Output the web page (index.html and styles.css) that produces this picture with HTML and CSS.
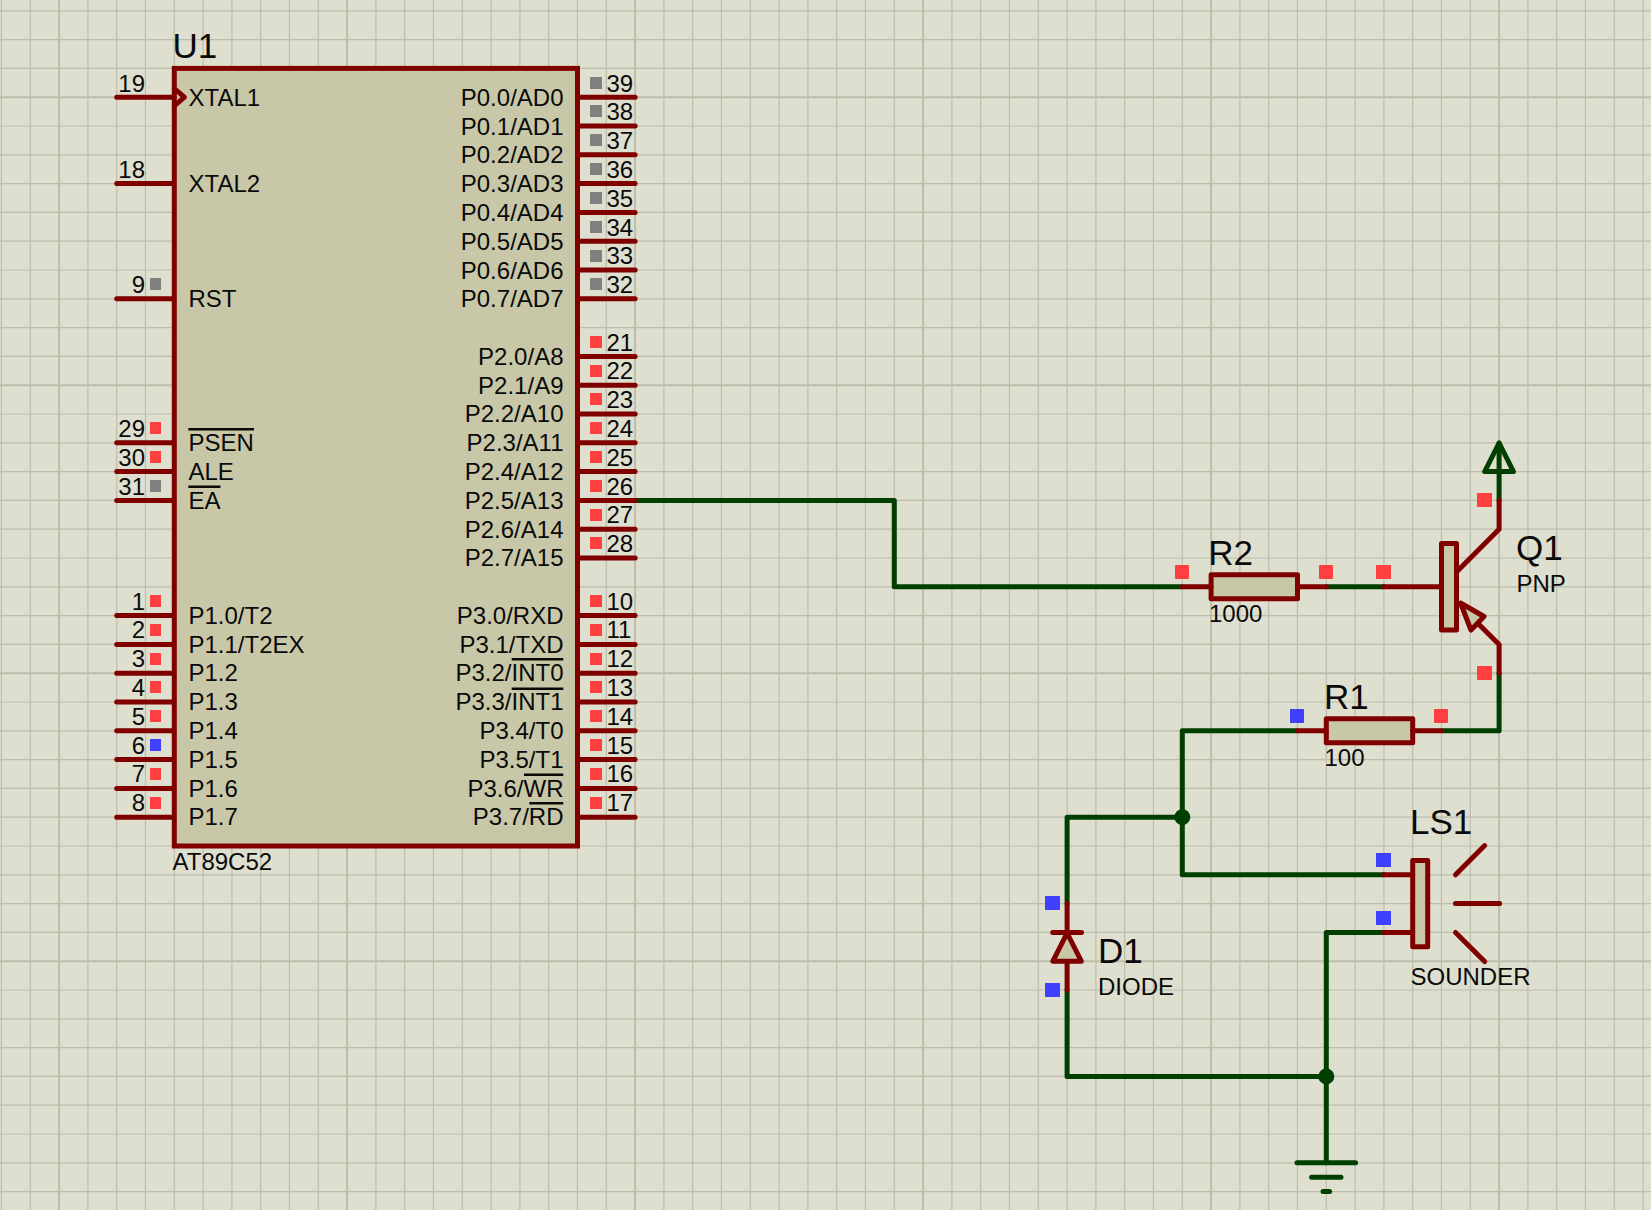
FILE: index.html
```html
<!DOCTYPE html>
<html lang="en">
<head>
<meta charset="utf-8">
<title>AT89C52 sounder schematic</title>
<link rel="stylesheet" href="styles.css">
</head>
<body>
<main class="sheet">
<svg class="schematic" width="1651" height="1210" viewBox="0 0 1651 1210" xmlns="http://www.w3.org/2000/svg">
  <g class="grid">
    <path class="grid-minor" d="M1.5 0V1210M30.3 0V1210M87.9 0V1210M116.7 0V1210M145.5 0V1210M174.3 0V1210M203.1 0V1210M231.9 0V1210M260.7 0V1210M289.5 0V1210M318.3 0V1210M375.9 0V1210M404.7 0V1210M433.5 0V1210M462.3 0V1210M491.1 0V1210M519.9 0V1210M548.7 0V1210M577.5 0V1210M606.3 0V1210M663.9 0V1210M692.7 0V1210M721.5 0V1210M750.3 0V1210M779.1 0V1210M807.9 0V1210M836.7 0V1210M865.5 0V1210M894.3 0V1210M951.9 0V1210M980.7 0V1210M1009.5 0V1210M1038.3 0V1210M1067.1 0V1210M1095.9 0V1210M1124.7 0V1210M1153.5 0V1210M1182.3 0V1210M1239.9 0V1210M1268.7 0V1210M1297.5 0V1210M1326.3 0V1210M1355.1 0V1210M1383.9 0V1210M1412.7 0V1210M1441.5 0V1210M1470.3 0V1210M1527.9 0V1210M1556.7 0V1210M1585.5 0V1210M1614.3 0V1210M1643.1 0V1210"/>
    <path class="grid-minor" d="M0 10.8H1651M0 39.6H1651M0 68.4H1651M0 126H1651M0 154.8H1651M0 183.6H1651M0 212.4H1651M0 241.2H1651M0 270H1651M0 298.8H1651M0 327.6H1651M0 356.4H1651M0 414H1651M0 442.8H1651M0 471.6H1651M0 500.4H1651M0 529.2H1651M0 558H1651M0 586.8H1651M0 615.6H1651M0 644.4H1651M0 702H1651M0 730.8H1651M0 759.6H1651M0 788.4H1651M0 817.2H1651M0 846H1651M0 874.8H1651M0 903.6H1651M0 932.4H1651M0 990H1651M0 1018.8H1651M0 1047.6H1651M0 1076.4H1651M0 1105.2H1651M0 1134H1651M0 1162.8H1651M0 1191.6H1651"/>
    <path class="grid-major" d="M59.1 0V1210M347.1 0V1210M635.1 0V1210M923.1 0V1210M1211.1 0V1210M1499.1 0V1210M0 97.2H1651M0 385.2H1651M0 673.2H1651M0 961.2H1651"/>
  </g>

  <g class="wires">
    <path class="wire" d="M635.1 500.4H894.3V586.8H1182M1326.3 586.8H1383.9"/>
    <path class="wire" d="M1499.1 500.4V443M1499.1 673.2V730.8H1441.5M1297.5 730.8H1182.3V874.8H1383.9"/>
    <path class="wire" d="M1182.3 817.2H1067.1V903.6M1067.1 990V1076.4H1326.3M1383.9 932.4H1326.3V1162.8"/>
    <path class="wire" d="M1499.1 443L1484.7 471.6H1513.5Z"/>
    <path class="wire" d="M1297 1162.8H1355.6M1311.6 1177.2H1341M1323 1191.6H1329.6"/>
    <circle class="junction" cx="1182.3" cy="817.2" r="8"/>
    <circle class="junction" cx="1326.3" cy="1076.4" r="8"/>
  </g>

  <g class="parts">
    <rect class="body chip" x="174.3" y="68.4" width="403.2" height="777.6"/>
    <path class="lead" d="M116.7 97.2H174M116.7 183.6H174M116.7 298.8H174M116.7 442.8H174M116.7 471.6H174M116.7 500.4H174M116.7 615.6H174M116.7 644.4H174M116.7 673.2H174M116.7 702H174M116.7 730.8H174M116.7 759.6H174M116.7 788.4H174M116.7 817.2H174"/>
    <path class="lead" d="M578 97.2H635.1M578 126H635.1M578 154.8H635.1M578 183.6H635.1M578 212.4H635.1M578 241.2H635.1M578 270H635.1M578 298.8H635.1M578 356.4H635.1M578 385.2H635.1M578 414H635.1M578 442.8H635.1M578 471.6H635.1M578 500.4H635.1M578 529.2H635.1M578 558H635.1M578 615.6H635.1M578 644.4H635.1M578 673.2H635.1M578 702H635.1M578 730.8H635.1M578 759.6H635.1M578 788.4H635.1M578 817.2H635.1"/>
    <path class="lead open" d="M174.3 88.6L184.4 97.2L174.3 105.8"/>

    <rect class="body" x="1211.1" y="574.8" width="86.4" height="24"/>
    <rect class="body" x="1326.3" y="718.8" width="86.4" height="24"/>
    <path class="lead" d="M1182.5 586.8H1211M1297.5 586.8H1326.3M1383.9 586.8H1441.5M1297.5 730.8H1326.3M1412.7 730.8H1441.5"/>

    <rect class="body" x="1441.5" y="543.6" width="15" height="86.4"/>
    <path class="lead" d="M1499.1 500.4V529.2L1457 571.4M1499.1 673.2V644.4L1478 623.4"/>
    <path class="body" d="M1460.5 603L1484 616.5L1471 630Z"/>

    <rect class="body" x="1412.7" y="860.4" width="15" height="86.4"/>
    <path class="lead" d="M1383.9 874.8H1412.7M1383.9 932.4H1412.7M1455.5 874.8L1484.7 845.6M1455.5 903.6H1499.6M1455.5 932.4L1484.7 961.6"/>

    <path class="lead" d="M1067.1 903.6V932.4M1067.1 961.2V990M1052.7 932.4H1081.5"/>
    <path class="body" d="M1067.1 933L1052.9 961.2H1081.3Z"/>
  </g>

  <g class="markers">
    <rect class="mark grey" x="150" y="278" width="11" height="12"/>
    <rect class="mark red" x="150" y="422" width="11" height="12"/>
    <rect class="mark red" x="150" y="451" width="11" height="12"/>
    <rect class="mark grey" x="150" y="480" width="11" height="12"/>
    <rect class="mark red" x="150" y="595" width="11" height="12"/>
    <rect class="mark red" x="150" y="624" width="11" height="12"/>
    <rect class="mark red" x="150" y="653" width="11" height="12"/>
    <rect class="mark red" x="150" y="681" width="11" height="12"/>
    <rect class="mark red" x="150" y="710" width="11" height="12"/>
    <rect class="mark blue" x="150" y="739" width="11" height="12"/>
    <rect class="mark red" x="150" y="768" width="11" height="12"/>
    <rect class="mark red" x="150" y="797" width="11" height="12"/>

    <rect class="mark grey" x="590" y="77" width="12" height="12"/>
    <rect class="mark grey" x="590" y="105" width="12" height="12"/>
    <rect class="mark grey" x="590" y="134" width="12" height="12"/>
    <rect class="mark grey" x="590" y="163" width="12" height="12"/>
    <rect class="mark grey" x="590" y="192" width="12" height="12"/>
    <rect class="mark grey" x="590" y="221" width="12" height="12"/>
    <rect class="mark grey" x="590" y="250" width="12" height="12"/>
    <rect class="mark grey" x="590" y="278" width="12" height="12"/>

    <rect class="mark red" x="590" y="336" width="12" height="12"/>
    <rect class="mark red" x="590" y="365" width="12" height="12"/>
    <rect class="mark red" x="590" y="393" width="12" height="12"/>
    <rect class="mark red" x="590" y="422" width="12" height="12"/>
    <rect class="mark red" x="590" y="451" width="12" height="12"/>
    <rect class="mark red" x="590" y="480" width="12" height="12"/>
    <rect class="mark red" x="590" y="509" width="12" height="12"/>
    <rect class="mark red" x="590" y="537" width="12" height="12"/>

    <rect class="mark red" x="590" y="595" width="12" height="12"/>
    <rect class="mark red" x="590" y="624" width="12" height="12"/>
    <rect class="mark red" x="590" y="653" width="12" height="12"/>
    <rect class="mark red" x="590" y="681" width="12" height="12"/>
    <rect class="mark red" x="590" y="710" width="12" height="12"/>
    <rect class="mark red" x="590" y="739" width="12" height="12"/>
    <rect class="mark red" x="590" y="768" width="12" height="12"/>
    <rect class="mark red" x="590" y="797" width="12" height="12"/>

    <rect class="mark red" x="1175" y="565" width="14" height="14"/>
    <rect class="mark red" x="1319" y="565" width="14" height="14"/>
    <rect class="mark red" x="1376" y="565" width="15" height="14"/>
    <rect class="mark red" x="1477" y="493" width="15" height="14"/>
    <rect class="mark red" x="1477" y="666" width="15" height="14"/>
    <rect class="mark blue" x="1290" y="709" width="14" height="14"/>
    <rect class="mark red" x="1434" y="709" width="14" height="14"/>
    <rect class="mark blue" x="1045" y="896" width="15" height="14"/>
    <rect class="mark blue" x="1045" y="983" width="15" height="14"/>
    <rect class="mark blue" x="1376" y="853" width="15" height="14"/>
    <rect class="mark blue" x="1376" y="911" width="15" height="14"/>
  </g>

  <g class="pin-names">
    <text x="188.5" y="105.7">XTAL1</text>
    <text x="188.5" y="192.1">XTAL2</text>
    <text x="188.5" y="307.3">RST</text>
    <text x="188.5" y="451.1">PSEN</text>
    <text x="188.5" y="479.9">ALE</text>
    <text x="188.5" y="508.7">EA</text>
    <text x="188.5" y="623.8">P1.0/T2</text>
    <text x="188.5" y="652.6">P1.1/T2EX</text>
    <text x="188.5" y="681.4">P1.2</text>
    <text x="188.5" y="710.2">P1.3</text>
    <text x="188.5" y="739">P1.4</text>
    <text x="188.5" y="767.8">P1.5</text>
    <text x="188.5" y="796.6">P1.6</text>
    <text x="188.5" y="825.4">P1.7</text>
  </g>
  <g class="pin-names end">
    <text x="563.5" y="105.7">P0.0/AD0</text>
    <text x="563.5" y="134.5">P0.1/AD1</text>
    <text x="563.5" y="163.3">P0.2/AD2</text>
    <text x="563.5" y="192.1">P0.3/AD3</text>
    <text x="563.5" y="220.9">P0.4/AD4</text>
    <text x="563.5" y="249.7">P0.5/AD5</text>
    <text x="563.5" y="278.5">P0.6/AD6</text>
    <text x="563.5" y="307.3">P0.7/AD7</text>
    <text x="563.5" y="364.7">P2.0/A8</text>
    <text x="563.5" y="393.5">P2.1/A9</text>
    <text x="563.5" y="422.3">P2.2/A10</text>
    <text x="563.5" y="451.1">P2.3/A11</text>
    <text x="563.5" y="479.9">P2.4/A12</text>
    <text x="563.5" y="508.7">P2.5/A13</text>
    <text x="563.5" y="537.5">P2.6/A14</text>
    <text x="563.5" y="566.3">P2.7/A15</text>
    <text x="563.5" y="623.8">P3.0/RXD</text>
    <text x="563.5" y="652.6">P3.1/TXD</text>
    <text x="563.5" y="681.4">P3.2/INT0</text>
    <text x="563.5" y="710.2">P3.3/INT1</text>
    <text x="563.5" y="739">P3.4/T0</text>
    <text x="563.5" y="767.8">P3.5/T1</text>
    <text x="563.5" y="796.6">P3.6/WR</text>
    <text x="563.5" y="825.4">P3.7/RD</text>
  </g>
  <path class="overbar" d="M188.3 429.3H254M188.3 486.7H220.5M511.7 659.3H563.3M511.7 688.7H563.3M524 774.7H563.3M529.3 803.3H563.3"/>

  <g class="pin-numbers end">
    <text x="145" y="91.6">19</text>
    <text x="145" y="178">18</text>
    <text x="145" y="293.2">9</text>
    <text x="145" y="437">29</text>
    <text x="145" y="465.8">30</text>
    <text x="145" y="494.6">31</text>
    <text x="145" y="609.6">1</text>
    <text x="145" y="638.4">2</text>
    <text x="145" y="667.2">3</text>
    <text x="145" y="696">4</text>
    <text x="145" y="724.8">5</text>
    <text x="145" y="753.6">6</text>
    <text x="145" y="782.4">7</text>
    <text x="145" y="811.2">8</text>
  </g>
  <g class="pin-numbers">
    <text x="606.4" y="91.6">39</text>
    <text x="606.4" y="120.4">38</text>
    <text x="606.4" y="149.2">37</text>
    <text x="606.4" y="178">36</text>
    <text x="606.4" y="206.8">35</text>
    <text x="606.4" y="235.6">34</text>
    <text x="606.4" y="264.4">33</text>
    <text x="606.4" y="293.2">32</text>
    <text x="606.4" y="350.6">21</text>
    <text x="606.4" y="379.4">22</text>
    <text x="606.4" y="408.2">23</text>
    <text x="606.4" y="437">24</text>
    <text x="606.4" y="465.8">25</text>
    <text x="606.4" y="494.6">26</text>
    <text x="606.4" y="523.4">27</text>
    <text x="606.4" y="552.2">28</text>
    <text x="606.4" y="609.6">10</text>
    <text x="606.4" y="638.4">11</text>
    <text x="606.4" y="667.2">12</text>
    <text x="606.4" y="696">13</text>
    <text x="606.4" y="724.8">14</text>
    <text x="606.4" y="753.6">15</text>
    <text x="606.4" y="782.4">16</text>
    <text x="606.4" y="811.2">17</text>
  </g>

  <g class="refs">
    <text x="172.5" y="58">U1</text>
    <text x="1208.2" y="564.5">R2</text>
    <text x="1516" y="559.5">Q1</text>
    <text x="1324" y="708.5">R1</text>
    <text x="1098" y="962.5">D1</text>
    <text x="1410" y="834">LS1</text>
  </g>
  <g class="values">
    <text x="172.5" y="870">AT89C52</text>
    <text x="1209" y="622">1000</text>
    <text x="1516.5" y="592.3">PNP</text>
    <text x="1324.5" y="766">100</text>
    <text x="1098" y="994.6">DIODE</text>
    <text x="1410.5" y="985.3">SOUNDER</text>
  </g>
</svg>
</main>
</body>
</html>
```
FILE: styles.css
```css
html, body {
  margin: 0;
  padding: 0;
  background: #dfdfcf;
}

.sheet {
  width: 1651px;
  height: 1210px;
  overflow: hidden;
  background: #dfdfcf;
}

.schematic {
  display: block;
}

.grid path {
  fill: none;
  stroke: #bcbdab;
}

.grid-minor {
  stroke-width: 1.2;
}

.grid-major {
  stroke-width: 2;
}

.wire {
  fill: none;
  stroke: #003f00;
  stroke-width: 5;
  stroke-linecap: round;
  stroke-linejoin: round;
}

.junction {
  fill: #003f00;
}

.lead {
  fill: none;
  stroke: #800000;
  stroke-width: 5;
  stroke-linecap: round;
  stroke-linejoin: round;
}

.body {
  fill: #c8c8a8;
  stroke: #800000;
  stroke-width: 5;
  stroke-linejoin: round;
}

.chip {
  stroke-width: 5;
  stroke-linejoin: miter;
}

.mark {
  shape-rendering: crispEdges;
}

.red {
  fill: #ff4040;
}

.blue {
  fill: #4040ff;
}

.grey {
  fill: #808080;
}

.overbar {
  fill: none;
  stroke: #0a0a0a;
  stroke-width: 2.4;
}

text {
  font-family: "Liberation Sans", Arial, sans-serif;
  fill: #0a0a0a;
}

.end text {
  text-anchor: end;
}

.pin-names text,
.pin-numbers text,
.values text {
  font-size: 24px;
}

.refs text {
  font-size: 35px;
}
```
